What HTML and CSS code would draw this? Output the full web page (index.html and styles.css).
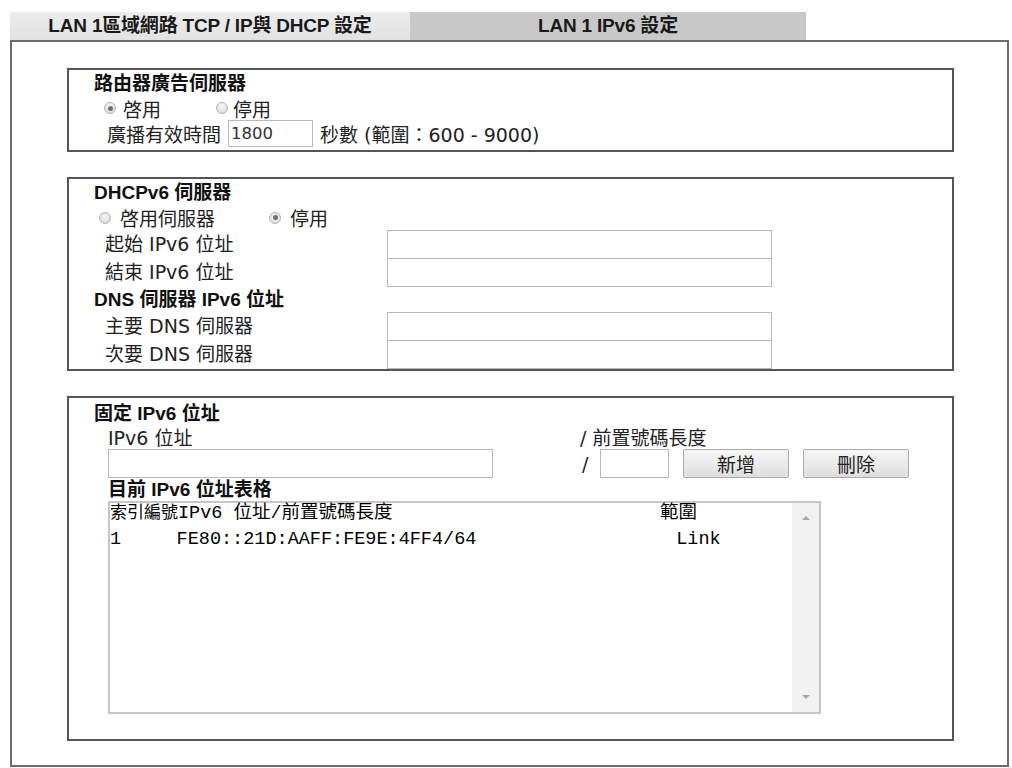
FILE: index.html
```html
<!DOCTYPE html>
<html lang="zh-Hant">
<head>
<meta charset="utf-8">
<title>LAN 1 IPv6 設定</title>
<link rel="stylesheet" href="styles.css">
</head>
<body>
<div class="page">
  <div class="tabs">
    <div class="tab tab-a">LAN 1區域網路 TCP / IP與 DHCP 設定</div>
    <div class="tab tab-b">LAN 1 IPv6 設定</div>
  </div>
  <div class="panel">
    <section class="group g1">
      <div class="title">路由器廣告伺服器</div>
      <div class="radios r1">
        <span class="opt"><span class="radio on"></span>啓用</span>
        <span class="opt opt2"><span class="radio"></span>停用</span>
      </div>
      <div class="timerow">
        <span class="lbl">廣播有效時間</span>
        <input class="field time" type="text" value="1800">
        <span class="unit">秒數 (範圍：600 - 9000)</span>
      </div>
    </section>

    <section class="group g2">
      <div class="title">DHCPv6 伺服器</div>
      <div class="radios r2">
        <span class="opt"><span class="radio"></span>啓用伺服器</span>
        <span class="opt opt2"><span class="radio on"></span>停用</span>
      </div>
      <div class="frow first"><span class="lbl">起始 IPv6 位址</span><input class="field wide" type="text"></div>
      <div class="frow second"><span class="lbl">結束 IPv6 位址</span><input class="field wide" type="text"></div>
      <div class="title sub">DNS 伺服器 IPv6 位址</div>
      <div class="frow first"><span class="lbl">主要 DNS 伺服器</span><input class="field wide" type="text"></div>
      <div class="frow second"><span class="lbl">次要 DNS 伺服器</span><input class="field wide" type="text"></div>
    </section>

    <section class="group g3">
      <div class="title">固定 IPv6 位址</div>
      <div class="inner">
        <div class="addr">
          <span class="lbl">IPv6 位址</span>
          <span class="lbl">/ 前置號碼長度</span>
          <input class="field addr-in" type="text">
          <div class="prefix">
            <span class="slash">/</span>
            <input class="field small" type="text">
            <button class="btn" type="button">新增</button>
            <button class="btn" type="button">刪除</button>
          </div>
        </div>
        <div class="title tbl-title">目前 IPv6 位址表格</div>
        <div class="listbox">
          <div class="list-body">
            <div class="lhead"><span class="c1">索引編號</span><span class="c2">IPv6 位址/前置號碼長度</span><span class="c3">範圍</span></div>
            <div class="lrow">1     FE80::21D:AAFF:FE9E:4FF4/64                  Link</div>
          </div>
          <div class="scroll">
            <span class="arrow up"></span>
            <span class="arrow down"></span>
          </div>
        </div>
      </div>
    </section>
  </div>
</div>
</body>
</html>
```

FILE: styles.css
```css
* { box-sizing: border-box; }
html, body { margin: 0; padding: 0; background: #fff; }
body {
  font-family: "DejaVu Sans", "Noto Sans CJK TC", sans-serif;
  font-size: 19px;
  color: #222;
}
.page { padding: 12px 0 0 10px; width: 1012px; }

.tabs { display: flex; height: 28px; }
.tab {
  font-family: "Liberation Sans", "Noto Sans CJK TC", sans-serif;
  font-weight: bold;
  font-size: 19px;
  line-height: 28px;
  text-align: center;
  color: #1a1a1a;
  white-space: nowrap;
  letter-spacing: -0.2px;
}
.tab-a { width: 400px; background: linear-gradient(#ececec, #e2e2e2); }
.tab-b { width: 396px; background: #c8c8c8; }

.panel {
  width: 999px;
  height: 727px;
  border: 2px solid #6c6c6c;
  padding: 26px 0 0 55px;
}

.group {
  width: 887px;
  border: 2px solid #555;
  padding-left: 25px;
}
.group + .group { margin-top: 25px; }

.title {
  font-family: "Liberation Sans", "Noto Sans CJK TC", sans-serif;
  font-weight: bold;
  font-size: 19px;
  color: #111;
  white-space: nowrap;
}

/* radios */
.radios { display: flex; align-items: center; white-space: nowrap; }
.opt { display: flex; align-items: center; }
.radio {
  display: inline-block;
  width: 12px;
  height: 12px;
  border-radius: 50%;
  border: 1px solid #b4b4b4;
  background: radial-gradient(circle at 50% 35%, #f8f8f8, #d4d4d4);
  position: relative;
}
.radio.on::after {
  content: "";
  position: absolute;
  left: 2.5px;
  top: 2.5px;
  width: 5px;
  height: 5px;
  border-radius: 50%;
  background: #707070;
}

/* inputs */
.field {
  margin: 0;
  border: 1px solid #b8b8b8;
  background: #fff;
  font-family: "DejaVu Sans", sans-serif;
  font-size: 16.5px;
  color: #333;
  padding: 0 2px;
  outline: none;
}

/* group 1 */
.g1 { padding-top: 1px; padding-bottom: 3px; }
.g1 .title { line-height: 25px; height: 25px; }
.r1 { height: 24px; padding-left: 10px; }
.r1 .opt { gap: 7px; }
.r1 .opt2 { margin-left: 55px; gap: 5px; }
.timerow {
  display: flex;
  align-items: center;
  height: 27px;
  padding-left: 13px;
  white-space: nowrap;
}
.field.time { width: 85px; height: 27px; margin: 0 7px 0 7px; }

/* group 2 */
.g2 { padding-top: 1px; }
.g2 .title { line-height: 25px; height: 25px; }
.r2 { height: 25px; padding-left: 5px; }
.r2 .opt { gap: 9px; }
.r2 .opt2 { margin-left: 54px; }
.frow { display: flex; align-items: flex-start; white-space: nowrap; }
.frow.first { height: 29px; }
.frow.second { height: 28px; }
.frow .lbl { width: 293px; padding-left: 11px; line-height: 29px; }
.frow.second .lbl { line-height: 29px; margin-top: -1px; }
.field.wide { width: 385px; height: 29px; }
.frow.second .field.wide { height: 28px; border-top: 0; }

/* group 3 */
.g3 { padding-top: 3px; height: 345px; }
.g3 > .title { line-height: 26px; height: 26px; }
.inner { padding-left: 14px; }
.addr {
  display: grid;
  grid-template-columns: 385px auto;
  grid-template-rows: 22px 29px;
  column-gap: 87px;
  white-space: nowrap;
}
.addr .lbl { line-height: 22px; }
.field.addr-in { width: 385px; height: 29px; }
.prefix { display: flex; align-items: center; height: 29px; }
.slash { width: 20px; padding-left: 2px; }
.field.small { width: 69px; height: 29px; }
.btn {
  margin: 0 0 0 14px;
  width: 106px;
  height: 29px;
  padding: 0;
  border: 1px solid #a9a9a9;
  border-radius: 2px;
  background: linear-gradient(#f7f7f7, #dedede);
  font-family: "DejaVu Sans", "Noto Sans CJK TC", sans-serif;
  font-size: 19px;
  color: #222;
}
.tbl-title { line-height: 23px; height: 23px; }

.listbox {
  display: flex;
  width: 713px;
  height: 213px;
  border: 2px solid #c6c6c6;
}
.list-body {
  flex: 1;
  font-family: "Liberation Mono", "Noto Sans CJK TC", monospace;
  font-size: 18.5px;
  color: #000;
}
.lhead { display: flex; line-height: 22px; height: 22px; white-space: pre; }
.lhead .c1 { width: 68px; font-size: 17px; }
.lhead .c2 { width: 482px; }
.lrow { line-height: 30px; height: 30px; white-space: pre; }
.scroll {
  width: 27px;
  background: #f1f1f1;
  display: flex;
  flex-direction: column;
  justify-content: space-between;
  align-items: center;
  padding: 13px 0 13px;
}
.arrow { width: 0; height: 0; border-left: 4px solid transparent; border-right: 4px solid transparent; }
.arrow.up { border-bottom: 4px solid #a8a8a8; }
.arrow.down { border-top: 4px solid #a8a8a8; }
```
